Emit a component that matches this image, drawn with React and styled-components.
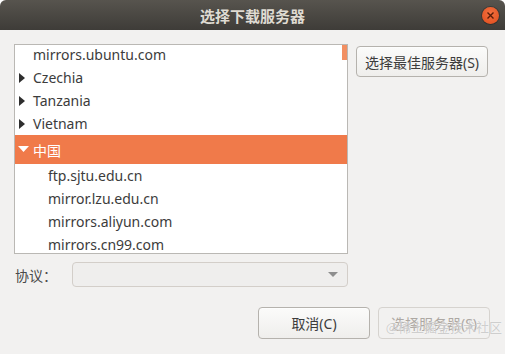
import React from 'react';
import styled, { createGlobalStyle } from 'styled-components';

const GlobalStyle = createGlobalStyle`
  html, body {
    margin: 0;
    padding: 0;
    background: #ffffff;
  }
  * {
    box-sizing: border-box;
  }
`;

const Window = styled.div`
  position: relative;
  width: 505px;
  height: 354px;
  background: #f2f1f0;
  font-family: 'Noto Sans', 'Noto Sans CJK SC', sans-serif;
  font-size: 14px;
  color: #3c3c3c;
  border-radius: 6px 6px 0 0;
  overflow: hidden;
  display: flex;
  flex-direction: column;
`;

const TitleBar = styled.div`
  position: relative;
  height: 30px;
  display: flex;
  align-items: center;
  justify-content: center;
  background: linear-gradient(#57544e, #3e3c38);
  color: #dfdbd2;
  font-weight: bold;
  font-size: 15px;
  font-family: 'Noto Sans CJK SC', sans-serif;
`;

const CloseButton = styled.div`
  position: absolute;
  right: 6px;
  top: 7px;
  width: 17px;
  height: 17px;
  border-radius: 50%;
  background: radial-gradient(circle at 50% 35%, #f4703f, #df4c1c);
  box-shadow: 0 0 0 1px rgba(0, 0, 0, 0.25);
  display: flex;
  align-items: center;
  justify-content: center;
`;

const Content = styled.div`
  flex: 1;
  padding: 14px 15px 0 14px;
  display: flex;
  flex-direction: column;
`;

const TopRow = styled.div`
  display: flex;
  align-items: flex-start;
  gap: 8px;
`;

const ListBox = styled.div`
  position: relative;
  width: 334px;
  height: 210px;
  background: #ffffff;
  border: 1px solid #bab8b4;
  overflow: hidden;
`;

const ListInner = styled.div`
  margin-top: -2px;
`;

const Scrollbar = styled.div`
  position: absolute;
  right: 0;
  top: 0;
  width: 5px;
  height: 15px;
  background: #f28f62;
`;

const Row = styled.div`
  height: ${p => (p.$tall ? 29 : 23)}px;
  display: flex;
  align-items: center;
  padding-left: ${p => p.$indent}px;
  background: ${p => (p.$selected ? '#f07a4a' : 'transparent')};
  color: ${p => (p.$selected ? '#ffffff' : '#3c3c3c')};
  white-space: nowrap;
`;

const Expander = styled.span`
  width: 18px;
  display: flex;
  align-items: center;
  padding-left: ${p => (p.$down ? 3 : 4)}px;
`;

const Button = styled.button`
  height: ${p => (p.$h ? p.$h : 32)}px;
  width: ${p => p.$w}px;
  margin-top: ${p => (p.$top ? p.$top : 0)}px;
  padding: 0;
  border-radius: 4px;
  border: 1px solid ${p => (p.disabled ? '#d6d3cf' : '#b5b2ad')};
  background: ${p => (p.disabled ? '#f2f1f0' : 'linear-gradient(#fbfbfa, #efeeec)')};
  color: ${p => (p.disabled ? '#ada8a3' : '#3c3c3c')};
  font-family: 'Noto Sans', 'Noto Sans CJK SC', sans-serif;
  font-size: 14px;
  box-shadow: ${p => (p.disabled ? 'none' : '0 1px 0 rgba(255,255,255,0.6) inset')};
`;

const ProtocolRow = styled.div`
  display: flex;
  align-items: center;
  margin-top: 8px;
  width: 334px;
`;

const Label = styled.div`
  width: 58px;
  padding-left: 1px;
  color: #4a4a4a;
`;

const Combo = styled.div`
  flex: 1;
  height: 25px;
  border: 1px solid #d3cec9;
  border-radius: 4px;
  background: #efeeed;
  display: flex;
  align-items: center;
  justify-content: flex-end;
  padding-right: 9px;
`;

const ButtonRow = styled.div`
  display: flex;
  justify-content: flex-end;
  gap: 8px;
  margin-top: 20px;
`;

const Watermark = styled.div`
  position: absolute;
  right: 3px;
  bottom: 18px;
  font-family: 'Noto Sans CJK SC', sans-serif;
  font-size: 13px;
  color: rgba(175, 175, 175, 0.6);
  text-shadow: 0 0 1px #ffffff;
`;

const RightArrow = () => (
  <svg width="7" height="10" viewBox="0 0 7 10">
    <path d="M0 0 L6 5 L0 10 Z" fill="#2e2e2e" />
  </svg>
);

const DownArrow = ({ color }) => (
  <svg width="11" height="7" viewBox="0 0 11 7">
    <path d="M0 0 L11 0 L5.5 6 Z" fill={color} />
  </svg>
);

const countries = ['Czechia', 'Tanzania', 'Vietnam'];
const mirrors = ['ftp.sjtu.edu.cn', 'mirror.lzu.edu.cn', 'mirrors.aliyun.com', 'mirrors.cn99.com', 'mirrors.huaweicloud.com'];

export default function App() {
  return (
    <Window>
      <GlobalStyle />
      <TitleBar>
        选择下载服务器
        <CloseButton>
          <svg width="7" height="7" viewBox="0 0 7 7">
            <path d="M0.5 0.5 L6.5 6.5 M6.5 0.5 L0.5 6.5" stroke="#5a1c08" strokeWidth="1.4" />
          </svg>
        </CloseButton>
      </TitleBar>
      <Content>
        <TopRow>
          <ListBox>
            <ListInner>
              <Row $indent={18}>mirrors.ubuntu.com</Row>
              {countries.map(c => (
                <Row key={c} $indent={0}>
                  <Expander><RightArrow /></Expander>
                  {c}
                </Row>
              ))}
              <Row $indent={0} $selected $tall>
                <Expander $down><DownArrow color="#ffffff" /></Expander>
                中国
              </Row>
              {mirrors.map(m => (
                <Row key={m} $indent={33}>{m}</Row>
              ))}
            </ListInner>
            <Scrollbar />
          </ListBox>
          <Button $w={132} $h={31} $top={2}>选择最佳服务器(S)</Button>
        </TopRow>
        <ProtocolRow>
          <Label>协议：</Label>
          <Combo>
            <svg width="10" height="5" viewBox="0 0 10 5">
              <path d="M0 0 L10 0 L5 5 Z" fill="#8e8e8e" />
            </svg>
          </Combo>
        </ProtocolRow>
        <ButtonRow>
          <Button $w={112}>取消(C)</Button>
          <Button $w={112} disabled>选择服务器(S)</Button>
        </ButtonRow>
      </Content>
      <Watermark>@稀土掘金技术社区</Watermark>
    </Window>
  );
}
